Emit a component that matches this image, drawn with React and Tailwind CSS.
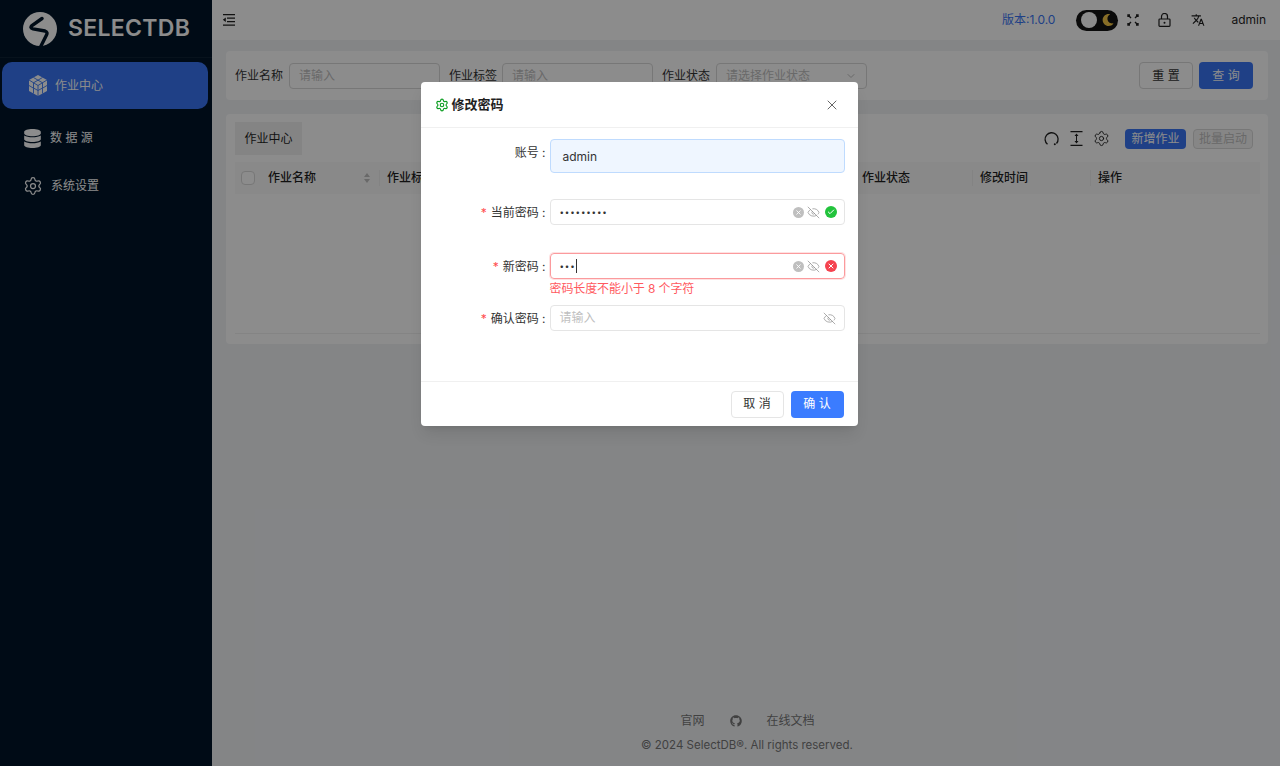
import { Settings, ChevronDown, X, Check, EyeOff } from "lucide-react";
import { FaDatabase, FaGithub, FaMoon } from "react-icons/fa";
import { MdTranslate } from "react-icons/md";

const FONT = "font-['Inter','Noto_Sans_CJK_SC',sans-serif]";

const Logo = () => (
  <svg width="36" height="36" viewBox="0 0 36 36">
    <circle cx="18" cy="18" r="17" fill="#fff" />
    <path d="M20 7.500L10 14.500Q7.500 17 11 17.800L23 20Q26 21 24.500 24L18.500 36" fill="none" stroke="#001529" strokeWidth="3.400" strokeLinecap="round" />
  </svg>
);

const CubeIcon = () => (
  <svg width="20" height="21" viewBox="0 0 20 21">
    <path d="M10 0l9 5v11l-9 5-9-5V5z" fill="#fff" />
    <path d="M1 5l9 5.500L19 5M10 10.500V21M5.500 2.500l9 5.300M14.500 2.500l-9 5.300M1 10.500l4.500 2.700V18.500M19 10.500l-4.500 2.700V18.500M5.500 7.800V13M14.500 7.800V13M10 15.500l-4.500-2.500M10 15.500l4.500-2.500" fill="none" stroke="#3975f4" strokeWidth="0.900" />
  </svg>
);

const MenuFold = () => (
  <svg width="14" height="12" viewBox="0 0 14 12" fill="#1f1f1f">
    <path d="M1 0h12v1.300H1zM5 3.400h8v1.300H5zM5 7h8v1.300H5zM1 10.500h12v1.300H1zM3.800 3.500v4.600L.8 5.800z" />
  </svg>
);

const Fullscreen = () => (
  <svg width="12" height="12" viewBox="0 0 12 12" fill="none" stroke="#1f1f1f" strokeWidth="1.400">
    <path d="M1 3V1h2M1 1l3 3M11 3V1H9M11 1L8 4M1 9v2h2M1 11l3-3M11 9v2H9M11 11L8 8" />
  </svg>
);

const LockIcon = () => (
  <svg width="13" height="14" viewBox="0 0 13 14" fill="none" stroke="#1f1f1f" strokeWidth="1.200">
    <rect x="1" y="6" width="11" height="7.400" rx="0.800" />
    <path d="M3.500 6V3.500a3 3 0 0 1 6 0V6" />
    <circle cx="6.500" cy="9.700" r="1" fill="#1f1f1f" stroke="none" />
  </svg>
);

const Reload = () => (
  <svg width="15" height="15" viewBox="0 0 15 15" fill="none" stroke="#1f1f1f" strokeWidth="1.300">
    <path d="M3.500 13.300A6.500 6.500 0 1 1 12.500 12.500" />
    <circle cx="10.800" cy="13.200" r="1" fill="#1f1f1f" stroke="none" />
  </svg>
);

const ColumnHeight = () => (
  <svg width="13" height="15" viewBox="0 0 13 15" fill="#1f1f1f">
    <path d="M.500 0h12v1.200H.500zM.500 13.800h12V15H.500zM6 3h1v9H6zM6.500 2.500l2 2.500h-4zM6.500 12.500l-2-2.500h4z" />
  </svg>
);

const StatusDot = ({ color, size, children }) => (
  <span className={`flex items-center justify-center rounded-full ${size} ${color}`}>{children}</span>
);

const Clear = () => (
  <StatusDot color="bg-[#bfbfbf]" size="w-[11px] h-[11px]">
    <X size={7} color="#fff" strokeWidth={3} />
  </StatusDot>
);

const Eye = () => <EyeOff size={13} color="#8c8c8c" strokeWidth={1.300} />;

const FormRow = ({ label, required, className, labelClass, children }) => (
  <div className={`flex ${className || ""}`}>
    <div className={`w-[129px] shrink-0 flex justify-end items-start pr-[4px] text-xs text-[#333] leading-[28px] ${labelClass || ""}`}>
      {required && <span className="text-[#ff4d4f] mr-1">*</span>}
      {label} :
    </div>
    <div className="w-[295px]">{children}</div>
  </div>
);

const NAV = [
  { label: "数 据 源", icon: <FaDatabase size={19} color="#fff" />, h: "h-[50px]" },
  { label: "系统设置", icon: <Settings size={20} color="#fff" strokeWidth={1.500} />, h: "h-[46px]" },
];

const COLS = [
  { label: "作业名称", w: "w-[119px]", sort: true },
  { label: "作业标签", w: "w-[475px]" },
  { label: "作业状态", w: "w-[118px]" },
  { label: "修改时间", w: "w-[118px]" },
  { label: "操作", w: "flex-1" },
];

export default function App() {
  return (
    <div className={`relative flex h-[766px] w-[1280px] overflow-hidden bg-[#f0f2f5] ${FONT}`}>
      {/* sidebar */}
      <aside className="w-[212px] shrink-0 bg-[#001529] text-white">
        <div className="flex items-center h-[58px] pl-[22px] gap-[10px] border-b border-white/5">
          <Logo />
          <span className="text-[23px] font-semibold tracking-[0.3px]">SELECTDB</span>
        </div>
        <div className="pl-[2px] pr-1 mt-1">
          <div className="flex items-center h-[47px] rounded-[10px] bg-[#3975f4] pl-[26px] gap-[7px]">
            <CubeIcon />
            <span className="text-xs text-white">作业中心</span>
          </div>
        </div>
        <div className="mt-[4px]">
          {NAV.map((n) => (
            <div key={n.label} className={`flex items-center ${n.h} pl-[23px] gap-2`}>
              {n.icon}
              <span className="text-xs text-white">{n.label}</span>
            </div>
          ))}
        </div>
      </aside>

      {/* main */}
      <div className="flex-1 flex flex-col min-w-0">
        <header className="h-[40px] shrink-0 bg-white flex items-center pl-[10px] pr-[14px]">
          <MenuFold />
          <div className="ml-auto flex items-center">
            <span className="text-xs text-[#3975f4]">版本:1.0.0</span>
            <div className="ml-[21px] w-[42px] h-[21px] rounded-full bg-[#141414] flex items-center justify-between pl-[5px] pr-[4px]">
              <span className="w-[16px] h-[16px] rounded-full bg-white" />
              <FaMoon size={12} color="#f7c948" />
            </div>
            <span className="ml-[9px]"><Fullscreen /></span>
            <span className="ml-[19px]"><LockIcon /></span>
            <span className="ml-[20px]"><MdTranslate size={14} color="#1f1f1f" /></span>
            <span className="ml-[26px] text-xs text-[#1f1f1f]">admin</span>
          </div>
        </header>

        <main className="flex-1 flex flex-col pl-[14px] pr-[12px] pt-[11px] pb-[13px]">
          {/* search */}
          <section className="h-[49px] bg-white rounded flex items-center pl-[9px] pr-[15px]">
            <span className="text-xs text-[#333] mr-[6px]">作业名称</span>
            <div className="w-[151px] h-[26px] border border-[#d9d9d9] rounded pl-[9px] text-xs text-[#bfbfbf] leading-[24px]">请输入</div>
            <span className="text-xs text-[#333] ml-[9px] mr-[5px]">作业标签</span>
            <div className="w-[151px] h-[26px] border border-[#d9d9d9] rounded pl-[9px] text-xs text-[#bfbfbf] leading-[24px]">请输入</div>
            <span className="text-xs text-[#333] ml-[9px] mr-[6px]">作业状态</span>
            <div className="w-[151px] h-[26px] border border-[#d9d9d9] rounded px-[9px] text-xs text-[#bfbfbf] flex items-center justify-between">
              请选择作业状态
              <ChevronDown size={12} color="#bfbfbf" />
            </div>
            <button className="ml-auto w-[54px] h-[27px] border border-[#d9d9d9] rounded bg-white text-xs text-[#333]">重 置</button>
            <button className="ml-[6px] w-[54px] h-[27px] rounded bg-[#3975f4] text-xs text-white">查 询</button>
          </section>

          {/* table card */}
          <section className="mt-[14px] h-[230px] bg-white rounded pl-[9px] pr-[8px] pt-[8px]">
            <div className="flex items-center justify-between h-[33px]">
              <div className="w-[67px] h-[33px] bg-[#f0f0f0] text-xs text-[#1f1f1f] flex items-center justify-center">作业中心</div>
              <div className="flex items-center pr-[7px]">
                <Reload />
                <span className="ml-[11px]"><ColumnHeight /></span>
                <span className="ml-[10px]"><Settings size={17} color="#1f1f1f" strokeWidth={1.300} /></span>
                <button className="ml-[15px] w-[61px] h-[20px] rounded-sm bg-[#3975f4] text-xs text-white">新增作业</button>
                <button className="ml-[7px] w-[60px] h-[20px] rounded-sm border border-[#d9d9d9] bg-[#f5f5f5] text-xs text-[#bfbfbf]">批量启动</button>
              </div>
            </div>
            <div className="mt-[7px] h-[32px] bg-[#fafafa] flex items-center text-xs font-medium text-[#1f1f1f]">
              <div className="w-[26px] pl-[6px] shrink-0">
                <div className="w-[14px] h-[14px] border border-[#d9d9d9] rounded-sm bg-white" />
              </div>
              {COLS.map((c, i) => (
                <div key={c.label} className={`${c.w} shrink-0 h-[16px] flex items-center justify-between px-[7px] ${i < COLS.length - 1 ? "border-r border-[#eeeeee]" : ""}`}>
                  {c.label}
                  {c.sort && (
                    <span className="flex flex-col gap-[2px] mr-[2px]">
                      <span className="w-0 h-0 border-x-[3px] border-x-transparent border-b-[4px] border-b-[#bfbfbf]" />
                      <span className="w-0 h-0 border-x-[3px] border-x-transparent border-t-[4px] border-t-[#bfbfbf]" />
                    </span>
                  )}
                </div>
              ))}
            </div>
            <div className="mt-[139px] border-t border-[#f0f0f0]" />
          </section>

          {/* footer */}
          <footer className="mt-auto text-center text-xs text-[#777]">
            <div className="flex items-center justify-center gap-[25px] pl-[1px]">
              <span>官网</span>
              <FaGithub size={12} />
              <span>在线文档</span>
            </div>
            <div className="mt-[9px] text-[11.5px]">© 2024 SelectDB®. All rights reserved.</div>
          </footer>
        </main>
      </div>

      {/* modal */}
      <div className="absolute inset-0 bg-black/45 flex justify-center items-start pt-[82px] pr-[2px]">
        <div className="w-[437px] h-[344px] bg-white rounded flex flex-col shadow-lg">
          <div className="h-[46px] shrink-0 flex items-center pl-[14px] pr-[18px] border-b border-[#f0f0f0]">
            <Settings size={14} color="#0d9e23" strokeWidth={2} />
            <span className="ml-[3px] text-[13px] font-semibold text-[#1f1f1f]">修改密码</span>
            <X size={16} color="#666" strokeWidth={1.500} className="ml-auto" />
          </div>

          <div className="flex-1 pt-[11px]">
            <FormRow label="账号" labelClass="pt-0">
              <div className="h-[34px] rounded bg-[#eff6ff] border border-[#bfdbfe] pl-[12px] text-xs text-[#333] leading-[33px]">admin</div>
            </FormRow>

            <FormRow label="当前密码" required className="mt-[26px]">
              <div className="h-[26px] rounded border border-[#e5e5e5] flex items-center pl-[9px] pr-[7px]">
                <span className="text-[8px] text-[#333] tracking-[0.85px]">•••••••••</span>
                <span className="ml-auto flex items-center gap-[3px]">
                  <Clear />
                  <Eye />
                  <span className="ml-[2px]">
                    <StatusDot color="bg-[#22c33c]" size="w-[12px] h-[12px]"><Check size={8} color="#fff" strokeWidth={3} /></StatusDot>
                  </span>
                </span>
              </div>
            </FormRow>

            <FormRow label="新密码" required className="mt-[26px]">
              <div className="h-[26px] rounded border border-[#fb9a9d] flex items-center pl-[9px] pr-[7px] shadow-[0_0_0_1px_#fee2e2]">
                <span className="text-[8px] text-[#333] tracking-[0.85px]">•••</span>
                <span className="w-px h-[14px] bg-[#333]" />
                <span className="ml-auto flex items-center gap-[3px]">
                  <Clear />
                  <Eye />
                  <span className="ml-[2px]">
                    <StatusDot color="bg-[#f5434f]" size="w-[12px] h-[12px]"><X size={8} color="#fff" strokeWidth={3} /></StatusDot>
                  </span>
                </span>
              </div>
              <div className="h-[26px] text-xs text-[#ff5a5f] leading-[20px] tracking-[-0.1px]">密码长度不能小于 8 个字符</div>
            </FormRow>

            <FormRow label="确认密码" required>
              <div className="h-[26px] rounded border border-[#e5e5e5] flex items-center pl-[9px] pr-[8px]">
                <span className="text-xs text-[#bfbfbf]">请输入</span>
                <span className="ml-auto"><Eye /></span>
              </div>
            </FormRow>
          </div>

          <div className="h-[45px] shrink-0 border-t border-[#f0f0f0] flex items-center justify-end pr-[14px] gap-[7px]">
            <button className="w-[53px] h-[27px] border border-[#e5e5e5] rounded text-xs text-[#333] bg-white">取 消</button>
            <button className="w-[53px] h-[27px] rounded text-xs text-white bg-[#3b7cff]">确 认</button>
          </div>
        </div>
      </div>
    </div>
  );
}
